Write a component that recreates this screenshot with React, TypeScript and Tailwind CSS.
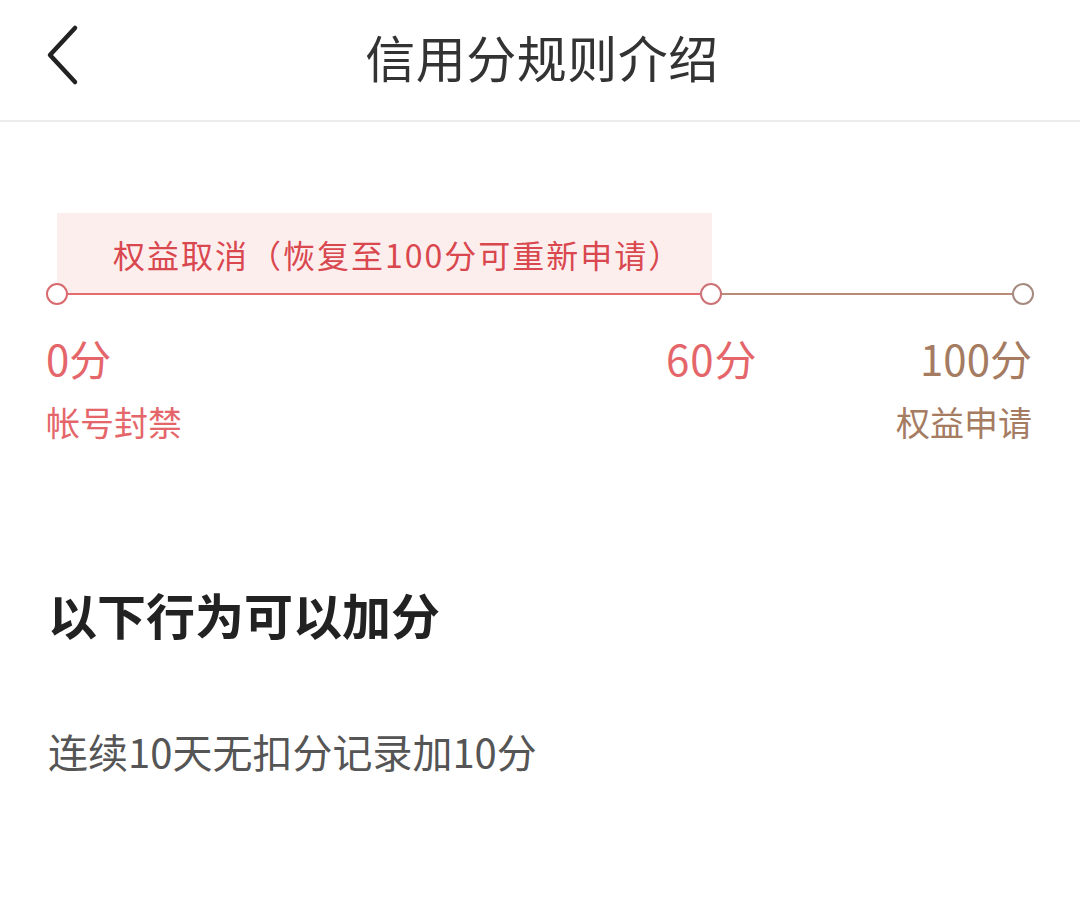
import React from "react";

const font = { fontFamily: '"Noto Sans CJK SC", "Noto Sans", sans-serif' };

function Dot({ color }: { color: string }) {
  return (
    <div
      className="h-[22px] w-[22px] shrink-0 rounded-full border-2 bg-white"
      style={{ borderColor: color }}
    />
  );
}

export default function App() {
  return (
    <div className="h-[903px] w-[1080px] bg-white" style={font}>
      {/* Header */}
      <div className="relative flex h-[122px] items-center justify-center border-b-2 border-[#ececec]">
        <div className="absolute left-[44px] top-[24px]">
          <svg width="40" height="62" viewBox="0 0 40 62">
            <path
              d="M31 4 L6 31 L31 58"
              fill="none"
              stroke="#222"
              strokeWidth="4.5"
              strokeLinecap="round"
              strokeLinejoin="round"
            />
          </svg>
        </div>
        <div className="pb-[8px] pl-[4px] text-[50px] leading-none tracking-[0.5px] text-[#333]">
          信用分规则介绍
        </div>
      </div>

      {/* Pink box */}
      <div className="ml-[57px] mt-[91px] flex h-[80px] w-[655px] items-start justify-start bg-[#fdeeee] pl-[56px] pt-[25px]">
        <span className="whitespace-nowrap text-[32px] leading-none tracking-[2px] text-[#d9484f]">
          权益取消（恢复至100分可重新申请）
        </span>
      </div>

      {/* Timeline */}
      <div className="relative -mt-[10px] ml-[46px] flex w-[988px] items-center">
        <Dot color="#d96a70" />
        <div className="h-[2px] w-[632px] bg-[#e46c70]" />
        <Dot color="#cc7276" />
        <div className="h-[2px] w-[290px] bg-[#b88a78]" />
        <Dot color="#a58a80" />
      </div>

      {/* Labels */}
      <div className="mt-[32px] ml-[46px] flex w-[986px] items-start">
        <div className="w-[620px] shrink-0">
          <div className="text-[42px] leading-none text-[#e5666a]">0分</div>
          <div className="mt-[26px] text-[34px] leading-none text-[#e5666a]">帐号封禁</div>
        </div>
        <div className="text-[42px] leading-none tracking-[1px] text-[#e5666a]">60分</div>
        <div className="flex-1 text-right">
          <div className="text-[42px] leading-none text-[#a57b62]">100分</div>
          <div className="mt-[26px] text-[34px] leading-none text-[#a57b62]">权益申请</div>
        </div>
      </div>

      {/* Section heading */}
      <div className="ml-[48px] mt-[150px] text-[49px] font-bold leading-none text-[#222]">
        以下行为可以加分
      </div>

      <div className="ml-[48px] mt-[93px] text-[40px] leading-none text-[#555]">
        连续10天无扣分记录加10分
      </div>
    </div>
  );
}
